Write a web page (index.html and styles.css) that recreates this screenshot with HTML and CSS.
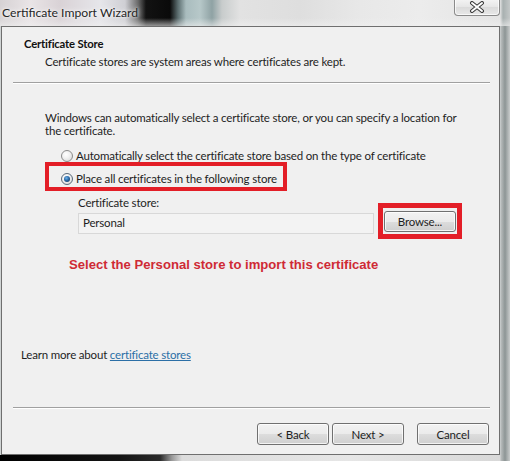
FILE: index.html
```html
<!DOCTYPE html>
<html>
<head>
<meta charset="utf-8">
<link rel="stylesheet" href="styles.css">
</head>
<body>
<div class="screen">
  <div class="titlebar">
    <span class="title">Certificate Import Wizard</span>
    <span class="close-btn">
      <svg width="16" height="12" viewBox="0 0 16 12">
        <path d="M3 2 L13 10 M13 2 L3 10" stroke="#3a3a3a" stroke-width="4" stroke-linecap="round" fill="none"/>
        <path d="M3 2 L13 10 M13 2 L3 10" stroke="#ffffff" stroke-width="2" stroke-linecap="round" fill="none"/>
      </svg>
    </span>
  </div>
  <div class="window">
    <div class="header">
      <div class="h-title">Certificate Store</div>
      <div class="h-sub">Certificate stores are system areas where certificates are kept.</div>
    </div>
    <div class="sep top-sep"></div>
    <div class="intro">Windows can automatically select a certificate store, or you can specify a location for<br>the certificate.</div>
    <div class="radio-row plain">
      <span class="radio"></span>
      <span>Automatically select the certificate store based on the type of certificate</span>
    </div>
    <div class="radio-row marked">
      <span class="radio checked"><span class="dot"></span></span>
      <span>Place all certificates in the following store</span>
    </div>
    <div class="store-row">
      <div class="store-col">
        <div class="store-label">Certificate store:</div>
        <div class="store-input">Personal</div>
      </div>
      <div class="browse-mark"><span class="btn browse">Browse...</span></div>
    </div>
    <div class="note">Select the Personal store to import this certificate</div>
    <div class="learn">Learn more about <a class="link" href="#">certificate stores</a></div>
    <div class="sep bottom-sep"></div>
    <div class="buttons">
      <span class="btn">&lt; Back</span>
      <span class="btn">Next &gt;</span>
      <span class="btn cancel">Cancel</span>
    </div>
  </div>
</div>
</body>
</html>
```

FILE: styles.css
```css
html, body {
  margin: 0;
  padding: 0;
}
body {
  width: 510px;
  height: 461px;
  overflow: hidden;
  font-family: Lato, "Open Sans", sans-serif;
  font-size: 11.5px;
  letter-spacing: -0.18px;
  color: #1e1e1e;
}
.screen {
  width: 510px;
  height: 461px;
  display: flex;
  flex-direction: column;
  background:
    linear-gradient(to right, rgba(0,0,0,0) 0, rgba(0,0,0,0) 500px, #b8bcbc 501px, #8d9595 505px, #c9cccc 510px),
    linear-gradient(to right, #000 0, #141414 120px, #2a2a2a 160px, #9a9a9a 172px, #dcdcdc 182px, #e6e6e6 350px, #d8d8d8 500px) left bottom / 100% 6px no-repeat,
    #d0d4d4;
}
.titlebar {
  height: 26px;
  display: flex;
  justify-content: space-between;
  align-items: flex-start;
  background:
    linear-gradient(to bottom, rgba(255,255,255,0) 0, rgba(255,255,255,0) 18px, rgba(240,240,240,0.6) 26px),
    linear-gradient(to right, #d6d2d4 0, #e9e4e6 30px, #d9d2d6 60px, #e6e6ea 100px, #cfcfd4 125px, #6a6a6a 138px, #121212 146px, #0a0a0a 170px, #5c6e70 178px, #a9bcbe 186px, #b7c8c9 200px, #8fa2a4 212px, #c8cccc 222px, #e2e2e2 240px, #dedede 300px, #e8e8e8 360px, #ececec 420px, #e4e4e4 500px, #a8b0b0 503px, #c4c8c8 510px);
}
.title {
  padding: 5px 0 0 2px;
  font-size: 12.2px;
  letter-spacing: 0;
  line-height: 15px;
  color: #262626;
  text-shadow: 0 0 6px #fff, 0 0 3px #fff;
}
.close-btn {
  width: 44px;
  height: 16px;
  margin: -1px 10px 0 0;
  border: 1px solid #8a8a8a;
  border-top: none;
  border-radius: 0 0 4px 4px;
  background: linear-gradient(to bottom, #f4f4f4, #e6e6e6 50%, #dadada 51%, #e8e8e8);
  box-shadow: inset 0 0 0 1px rgba(255,255,255,0.7);
  display: flex;
  justify-content: center;
  align-items: center;
}
.window {
  box-sizing: border-box;
  width: 499px;
  height: 429px;
  margin-left: 1px;
  border: 1px solid #6f6f6f;
  background: #f0f0f0;
  display: flex;
  flex-direction: column;
}
.header {
  padding: 9px 0 0 22px;
}
.h-title {
  font-weight: 700;
  font-size: 11.3px;
  line-height: 15px;
  color: #111;
}
.h-sub {
  margin: 3px 0 0 21px;
  line-height: 15px;
}
.sep {
  height: 0;
  border-top: 1px solid #a0a0a0;
  border-bottom: 1px solid #ffffff;
  margin-left: 11px;
  margin-right: 9px;
}
.top-sep {
  margin-top: 13px;
}
.intro {
  margin: 27px 0 0 43px;
  line-height: 13px;
  white-space: nowrap;
}
.radio-row {
  display: flex;
  align-items: center;
  gap: 3px;
  line-height: 15px;
  white-space: nowrap;
}
.radio-row.plain {
  margin: 11px 0 0 59px;
}
.radio-row.marked {
  align-self: flex-start;
  margin: -1px 0 0 43px;
  border: 4px solid #e31e27;
  padding: 5px 6px 1px 12px;
  height: 15px;
}
.radio {
  box-sizing: border-box;
  width: 12px;
  height: 12px;
  border-radius: 50%;
  border: 1px solid #8c8c8c;
  background: radial-gradient(circle at 40% 35%, #ffffff 0, #f2f2f2 40%, #d2d2d2 100%);
  display: flex;
  justify-content: center;
  align-items: center;
  flex: none;
}
.radio.checked {
  border-color: #5a6a7a;
}
.dot {
  width: 6px;
  height: 6px;
  border-radius: 50%;
  background: radial-gradient(circle at 40% 35%, #6fb2e8 0, #2a6aa8 45%, #0d2a4a 100%);
}
.store-row {
  display: flex;
  align-items: flex-start;
  margin-left: 76px;
}
.store-col {
  display: flex;
  flex-direction: column;
}
.store-label {
  margin-top: 4px;
  line-height: 15px;
}
.store-input {
  box-sizing: border-box;
  margin-top: 3px;
  width: 296px;
  height: 21px;
  border: 1px solid #d8d8d8;
  background: #f3f3f3;
  padding: 1px 0 0 4px;
  line-height: 16px;
}
.browse-mark {
  margin: 12px 0 0 4px;
  border: 5px solid #e31e27;
  padding: 3px 1px 2px 1px;
  display: flex;
  background: #efefef;
}
.btn {
  box-sizing: border-box;
  width: 72px;
  height: 21px;
  border: 1px solid #707070;
  border-radius: 3px;
  background: linear-gradient(to bottom, #f2f2f2 0, #ebebeb 50%, #dddddd 51%, #cfcfcf 100%);
  box-shadow: inset 0 0 0 1px rgba(255,255,255,0.75);
  display: flex;
  justify-content: center;
  align-items: center;
  line-height: 15px;
  color: #1e1e1e;
}
.note {
  margin: 18px 0 0 67px;
  font-family: "Liberation Sans", Arial, sans-serif;
  font-weight: 700;
  font-size: 13.1px;
  letter-spacing: 0;
  line-height: 16px;
  color: #cf2a35;
  white-space: nowrap;
}
.learn {
  margin: auto 0 0 19px;
  line-height: 15px;
}
.link {
  color: #2b6fa6;
  text-decoration: underline;
}
.bottom-sep {
  margin-top: 45px;
}
.buttons {
  display: flex;
  justify-content: flex-end;
  gap: 3px;
  margin-top: 14px;
  padding: 0 10px 9px 0;
}
.buttons .btn {
  height: 22px;
}
.buttons .cancel {
  margin-left: 10px;
}
```
